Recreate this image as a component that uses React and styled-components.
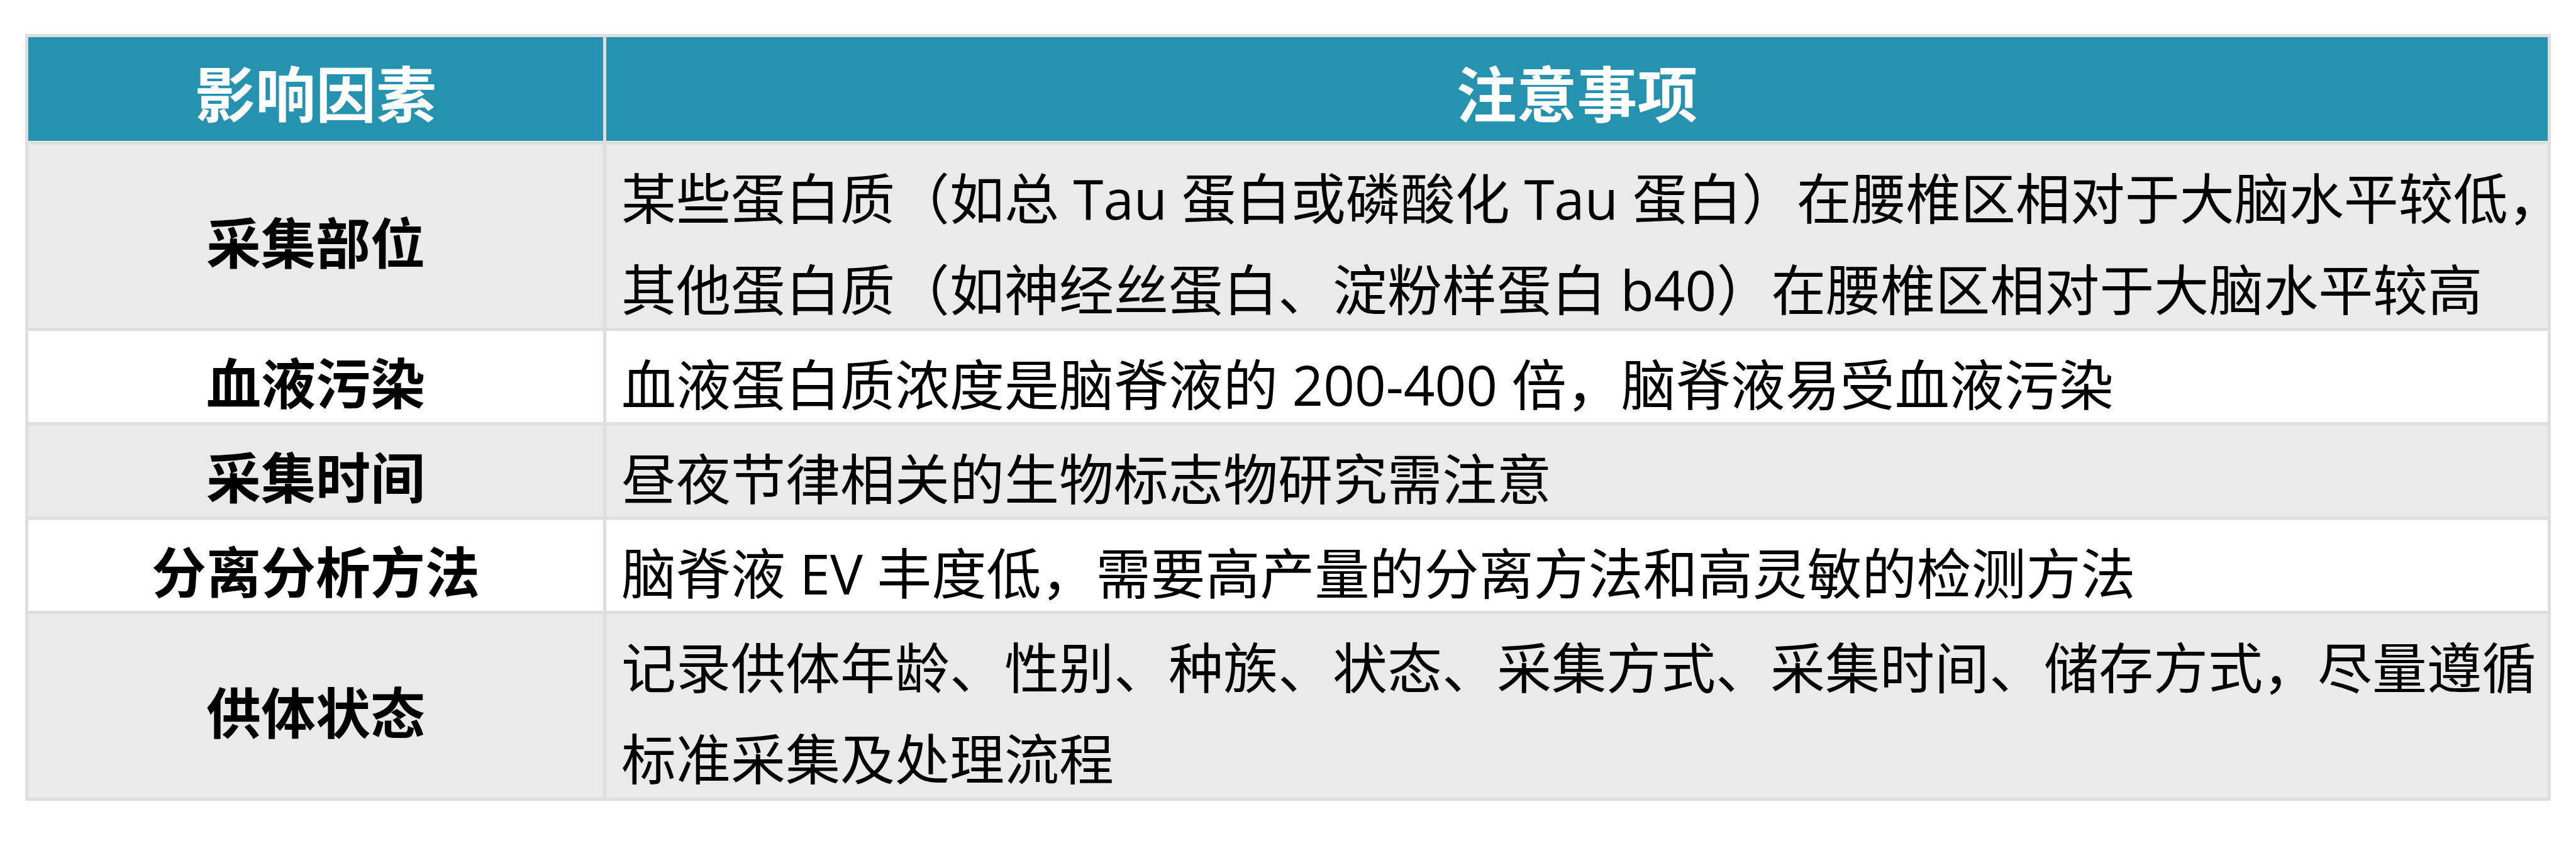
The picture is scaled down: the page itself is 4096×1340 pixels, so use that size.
import React from "react";
import styled, { createGlobalStyle } from "styled-components";

// table of factors and notes, rows alternate grey / white
const GlobalStyle = createGlobalStyle`
  body {
    margin: 0;
    background: #ffffff;
    font-family: "Open Sans", "Noto Sans CJK SC", sans-serif;
    color: #000000;
  }
`;

export const Page = styled.div`
  display: flex;
  justify-content: center;
  padding-top: 54px;
`;

export const Table = styled.div`
  display: grid;
  grid-template-columns: 914px 3087px;
  grid-template-rows: 166px 291px 145px 145px 145px 292px;
  gap: 5px;
  padding: 5px;
  background: #dedede;
`;

export const HeadCell = styled.div`
  display: flex;
  align-items: center;
  justify-content: center;
  box-sizing: border-box;
  padding-top: 5px;
  background: #2592b0;
  box-shadow: inset 0 -1px 0 #ffffff;
  color: #ffffff;
  font-weight: 700;
  font-size: 96px;
  white-space: nowrap;
`;

export const Factor = styled.div`
  display: flex;
  align-items: center;
  justify-content: center;
  box-sizing: border-box;
  padding-top: 13px;
  background: ${(p) => (p.$shade ? "#eaeaea" : "#ffffff")};
  font-weight: 700;
  font-size: 87px;
  white-space: nowrap;
`;

export const Note = styled.div`
  box-sizing: border-box;
  padding: 13px 0 0 24px;
  background: ${(p) => (p.$shade ? "#eaeaea" : "#ffffff")};
  font-size: 87px;
  line-height: 145px;
  white-space: nowrap;
`;

const rows = [
  {
    factor: "采集部位",
    lines: [
      "某些蛋白质（如总 Tau 蛋白或磷酸化 Tau 蛋白）在腰椎区相对于大脑水平较低，",
      "其他蛋白质（如神经丝蛋白、淀粉样蛋白 b40）在腰椎区相对于大脑水平较高",
    ],
  },
  {
    factor: "血液污染",
    lines: ["血液蛋白质浓度是脑脊液的 200-400 倍，脑脊液易受血液污染"],
  },
  {
    factor: "采集时间",
    lines: ["昼夜节律相关的生物标志物研究需注意"],
  },
  {
    factor: "分离分析方法",
    lines: ["脑脊液 EV 丰度低，需要高产量的分离方法和高灵敏的检测方法"],
  },
  {
    factor: "供体状态",
    lines: [
      "记录供体年龄、性别、种族、状态、采集方式、采集时间、储存方式，尽量遵循",
      "标准采集及处理流程",
    ],
  },
];

const App = () => {
  return (
    <Page>
      <GlobalStyle />
      <Table>
        <HeadCell>影响因素</HeadCell>
        <HeadCell>注意事项</HeadCell>
        {rows.map((row, i) => (
          <React.Fragment key={row.factor}>
            <Factor $shade={i % 2 === 0}>{row.factor}</Factor>
            <Note $shade={i % 2 === 0}>
              {row.lines.map((line, j) => (
                <div key={j}>{line}</div>
              ))}
            </Note>
          </React.Fragment>
        ))}
      </Table>
    </Page>
  );
};

export default App;
